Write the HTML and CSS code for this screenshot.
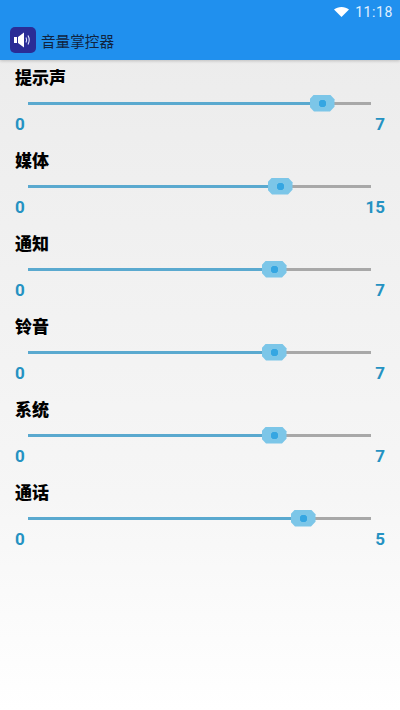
FILE: index.html
```html
<!DOCTYPE html>
<html lang="zh-CN">
<head>
    <meta charset="UTF-8">
    <meta name="viewport" content="width=device-width, initial-scale=1.0">
    <title>音量掌控器</title>
    <link rel="stylesheet" href="styles.css">
</head>
<body>
    <div class="header">
        <div class="status-bar">
            <svg class="wifi" width="15" height="10" viewBox="0 0 15 10"><path d="M0 2.400C2 0.900 4.600 0 7.500 0s5.500 0.900 7.500 2.400L7.500 10z" fill="#fff"/></svg>
            <span class="time">11:18</span>
        </div>
        <div class="app-bar">
            <div class="app-icon">
                <svg width="20" height="18" viewBox="0 0 20 18">
                    <path d="M1 6h3V12H1z" fill="#fff"/>
                    <path d="M5 6l6-4.500v15L5 12z" fill="#fff"/>
                    <path d="M13 6.500c0.800 1.500 0.800 3.500 0 5" fill="none" stroke="#dfe3ff" stroke-width="1.100"/>
                    <path d="M15 4.500c1.500 2.800 1.500 6.200 0 9" fill="none" stroke="#dfe3ff" stroke-width="1.100"/>
                </svg>
            </div>
            <span class="app-title">音量掌控器</span>
        </div>
    </div>
    <div class="content">
        <div class="row">
            <div class="label">提示声</div>
            <div class="slider"><div class="fill" style="width: 294px"></div><div class="thumb"></div><div class="rest"></div></div>
            <div class="range"><span>0</span><span>7</span></div>
        </div>
        <div class="row">
            <div class="label">媒体</div>
            <div class="slider"><div class="fill" style="width: 252px"></div><div class="thumb"></div><div class="rest"></div></div>
            <div class="range"><span>0</span><span>15</span></div>
        </div>
        <div class="row">
            <div class="label">通知</div>
            <div class="slider"><div class="fill" style="width: 246px"></div><div class="thumb"></div><div class="rest"></div></div>
            <div class="range"><span>0</span><span>7</span></div>
        </div>
        <div class="row">
            <div class="label">铃音</div>
            <div class="slider"><div class="fill" style="width: 246px"></div><div class="thumb"></div><div class="rest"></div></div>
            <div class="range"><span>0</span><span>7</span></div>
        </div>
        <div class="row">
            <div class="label">系统</div>
            <div class="slider"><div class="fill" style="width: 246px"></div><div class="thumb"></div><div class="rest"></div></div>
            <div class="range"><span>0</span><span>7</span></div>
        </div>
        <div class="row">
            <div class="label">通话</div>
            <div class="slider"><div class="fill" style="width: 275px"></div><div class="thumb"></div><div class="rest"></div></div>
            <div class="range"><span>0</span><span>5</span></div>
        </div>
    </div>
</body>
</html>
```

FILE: styles.css
```css
body {
    margin: 0;
    width: 400px;
    height: 710px;
    overflow: hidden;
    display: flex;
    flex-direction: column;
    background: linear-gradient(#ebebeb, #f6f6f6 70%, #ffffff);
    font-family: "Noto Sans CJK SC", "Roboto", sans-serif;
}
.header {
    height: 60px;
    background: #2090ee;
    box-shadow: 0 1px 3px rgba(0, 0, 0, 0.2);
}
.status-bar {
    height: 23px;
    display: flex;
    justify-content: flex-end;
    align-items: center;
    gap: 6px;
    padding-right: 7px;
}
.time {
    font-family: "Roboto", sans-serif;
    font-size: 14px;
    letter-spacing: 0.6px;
    color: #e0f0ff;
}
.app-bar {
    display: flex;
    align-items: center;
    gap: 5px;
    padding: 4px 0 0 10px;
}
.app-icon {
    width: 26px;
    height: 26px;
    background: #2a2c96;
    border-radius: 5px;
    display: flex;
    justify-content: center;
    align-items: center;
}
.app-title {
    font-size: 14.600px;
    color: #10233f;
}
.content {
    padding-top: 6px;
}
.row {
    height: 83px;
    padding: 0 15px;
}
.label {
    height: 21px;
    line-height: 21px;
    font-size: 17px;
    font-weight: 900;
    color: #000;
}
.slider {
    height: 22px;
    margin: 5px 14px 0 13px;
    display: flex;
    align-items: center;
}
.fill {
    height: 3px;
    background: #5aa9cf;
}
.rest {
    flex: 1;
    height: 3px;
    background: #a8a8a8;
}
.thumb {
    width: 25px;
    height: 17px;
    margin: 0 -12.500px;
    background: radial-gradient(circle, #35a6e2 0, #35a6e2 3.500px, #7cc6e8 4px);
    clip-path: polygon(18% 0, 82% 0, 100% 28%, 100% 72%, 82% 100%, 18% 100%, 0 72%, 0 28%);
    position: relative;
}
.range {
    display: flex;
    justify-content: space-between;
    font-family: "Roboto", sans-serif;
    font-size: 17px;
    font-weight: 700;
    line-height: 20px;
    color: #2592c2;
}
```
